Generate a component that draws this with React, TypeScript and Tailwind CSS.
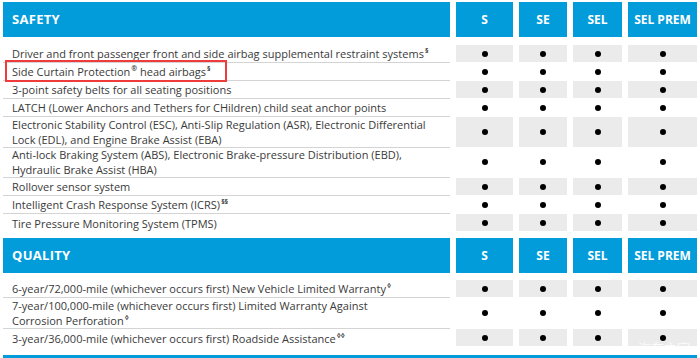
import React from "react";

type Row = { label: React.ReactNode; h: number; gray: boolean; last?: boolean; boxed?: boolean };

const Sup = ({ children }: { children: React.ReactNode }) => (
  <span className="inline-block align-top text-[7px] leading-[7px] font-bold mt-[1px] ml-[1px]">{children}</span>
);

const Dot = () => <span className="block w-[6px] h-[6px] rounded-full bg-black" />;

const Header = ({ title }: { title: string }) => (
  <div className="grid grid-cols-[447px_57px_48px_49px_69px] gap-x-[6px] h-[35px]">
    <div className="bg-[#029cdb] flex items-center pl-[9px] text-white font-bold text-[13px] tracking-[0.3px]">{title}</div>
    {["S", "SE", "SEL", "SEL PREM"].map((t) => (
      <div key={t} className="bg-[#029cdb] flex items-center justify-center text-white font-bold text-[12px]">
        {t}
      </div>
    ))}
  </div>
);

const Rows = ({ rows }: { rows: Row[] }) => (
  <div className="flex flex-col">
    {rows.map((r, i) => (
      <div key={i} className="grid grid-cols-[447px_57px_48px_49px_69px] gap-x-[6px]" style={{ height: r.h }}>
        <div
          className={
            "relative flex items-center pl-[9px] text-[11px] leading-[15px] text-[#3a3a3a] " +
            (r.last ? "" : "border-b border-[#d4d4d4]")
          }
        >
          {r.boxed && (
            <div className="absolute left-[2px] top-[-3px] w-[222px] h-[22px] border-2 border-solid border-[#ee3b3b]" />
          )}
          <div>{r.label}</div>
        </div>
        {[0, 1, 2, 3].map((c) => (
          <div key={c} className={"flex items-center justify-center mb-[1px] " + (r.gray ? "bg-[#ebebeb]" : "")}>
            <Dot />
          </div>
        ))}
      </div>
    ))}
  </div>
);

export default function App() {
  const safety: Row[] = [
    { label: <>Driver and front passenger front and side airbag supplemental restraint systems<Sup>§</Sup></>, h: 18, gray: true },
    { label: <>Side Curtain Protection<Sup>®</Sup> head airbags<Sup>§</Sup></>, h: 18, gray: false, boxed: true },
    { label: <>3-point safety belts for all seating positions</>, h: 18, gray: true },
    { label: <>LATCH (Lower Anchors and Tethers for CHildren) child seat anchor points</>, h: 18, gray: false },
    {
      label: (
        <>
          Electronic Stability Control (ESC), Anti-Slip Regulation (ASR), Electronic Differential
          <br />
          Lock (EDL), and Engine Brake Assist (EBA)
        </>
      ),
      h: 30,
      gray: true,
    },
    {
      label: (
        <>
          Anti-lock Braking System (ABS), Electronic Brake-pressure Distribution (EBD),
          <br />
          Hydraulic Brake Assist (HBA)
        </>
      ),
      h: 31,
      gray: false,
    },
    { label: <>Rollover sensor system</>, h: 18, gray: true },
    { label: <>Intelligent Crash Response System (ICRS)<Sup>§§</Sup></>, h: 18, gray: false },
    { label: <>Tire Pressure Monitoring System (TPMS)</>, h: 18, gray: true, last: true },
  ];
  const quality: Row[] = [
    { label: <>6-year/72,000-mile (whichever occurs first) New Vehicle Limited Warranty<Sup>◊</Sup></>, h: 18, gray: true },
    {
      label: (
        <>
          7-year/100,000-mile (whichever occurs first) Limited Warranty Against
          <br />
          Corrosion Perforation<Sup>◊</Sup>
        </>
      ),
      h: 31,
      gray: false,
    },
    { label: <>3-year/36,000-mile (whichever occurs first) Roadside Assistance<Sup>◊◊</Sup></>, h: 18, gray: true, last: true },
  ];
  return (
    <div
      className="relative w-[700px] h-[358px] bg-white overflow-hidden pl-[3px] pt-[2px]"
      style={{ fontFamily: "'Open Sans', Lato, sans-serif" }}
    >
      <Header title="SAFETY" />
      <div className="h-[8px]" />
      <Rows rows={safety} />
      <div className="h-[6px]" />
      <Header title="QUALITY" />
      <div className="h-[7px]" />
      <Rows rows={quality} />
      <div className="h-[8px]" />
      <div className="h-[4px] w-[694px] bg-[#029cdb]" />
      <div
        className="absolute right-[10px] bottom-[4px] text-[13px] text-white/80 leading-none"
        style={{ fontFamily: "'Noto Sans CJK SC', sans-serif" }}
      >
        汽车之家
      </div>
    </div>
  );
}
